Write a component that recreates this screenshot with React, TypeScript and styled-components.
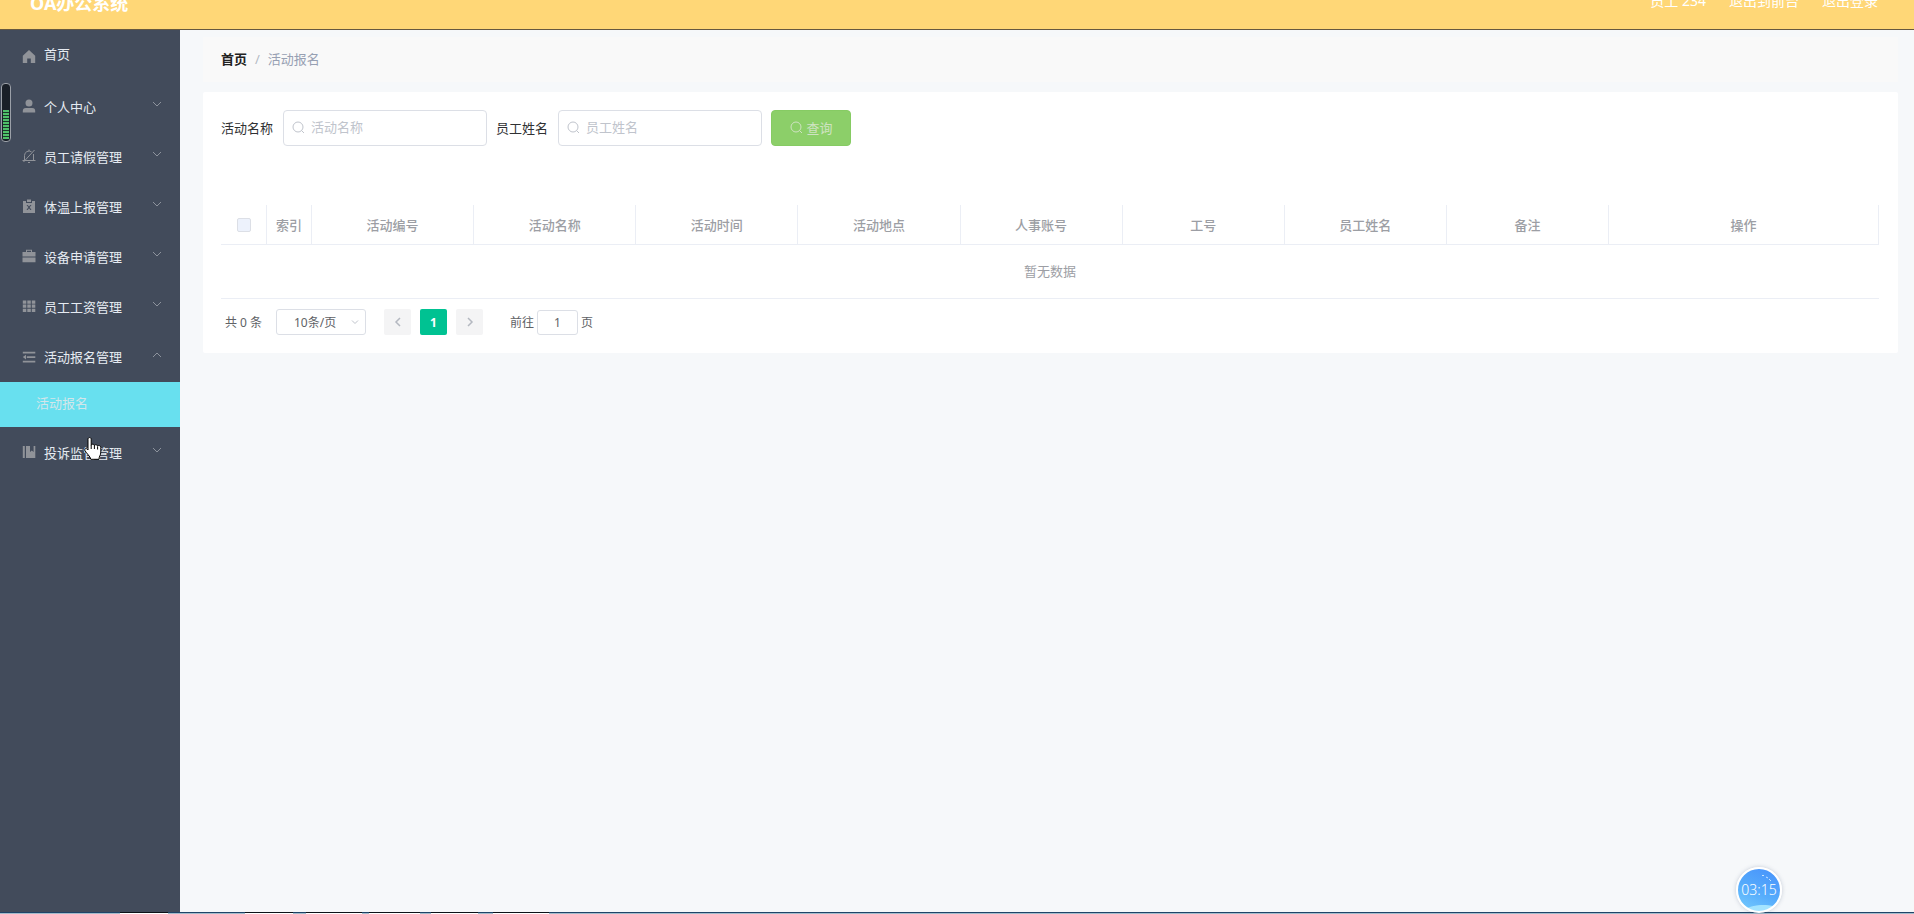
import React from 'react';
import styled, { createGlobalStyle } from 'styled-components';

const Global = createGlobalStyle`
  * { box-sizing: border-box; }
  html, body, #root { height: 100%; }
  body {
    margin: 0;
    overflow: hidden;
    background: #f6f8fa;
    color: #303133;
    font-family: "Noto Sans", "Noto Sans CJK SC", sans-serif;
    font-size: 13px;
  }
  button, input, select { font: inherit; margin: 0; }
  a { color: inherit; text-decoration: none; }
  h1, ul { margin: 0; padding: 0; }
  ul { list-style: none; }
`;

const Page = styled.div`
  height: 100vh;
  display: flex;
  flex-direction: column;
  overflow: hidden;
`;

const Header = styled.header`
  flex: none;
  height: 30px;
  display: flex;
  justify-content: space-between;
  align-items: flex-end;
  padding: 0 36px 16px 30px;
  background: #ffd777;
  border-bottom: 1px solid #66583f;
  color: #fff;
  overflow: hidden;
`;

const Title = styled.h1`
  font-size: 18px;
  line-height: 20px;
  font-weight: 700;
`;

const HeaderLinks = styled.nav`
  display: flex;
  gap: 23px;
  font-size: 14px;
  line-height: 24px;
`;

const Body = styled.div`
  flex: 1;
  min-height: 0;
  display: flex;
`;

const Sidebar = styled.nav`
  flex: none;
  width: 180px;
  background: #424b5b;
`;

const MenuIcon = styled.svg`
  width: 14px;
  height: 14px;
  flex: none;
  fill: #909399;
  stroke: none;
`;

const MenuButton = styled.button<{ $home?: boolean; $open?: boolean }>`
  width: 100%;
  height: ${(p) => (p.$home || p.$open ? 51 : 50)}px;
  padding: 0 18px 0 22px;
  padding-bottom: ${(p) => (p.$home ? 4 : 0)}px;
  display: flex;
  align-items: center;
  gap: 8px;
  border: 0;
  background: none;
  color: #e6ebf2;
  font-size: 13px;
  text-align: left;
  cursor: pointer;
  & > span { flex: 1; }
  & > ${MenuIcon} { margin-top: ${(p) => (p.$home ? 4 : 0)}px; }
`;

const Chevron = styled.svg`
  width: 10px;
  height: 14px;
  flex: none;
  margin-bottom: 4px;
  fill: none;
  stroke: #8d939d;
`;

const SubItem = styled.a`
  display: block;
  height: 45px;
  padding-left: 36px;
  line-height: 42px;
  background: #68e0ef;
  color: #d3e6ea;
`;

const Main = styled.main`
  flex: 1;
  min-width: 0;
  padding: 7px 16px 0 23px;
`;

const Crumbs = styled.nav`
  display: flex;
  gap: 6px;
  height: 45px;
  margin-bottom: 10px;
  padding: 0 19px 0 18px;
  line-height: 45px;
  background: #f9f9f9;
  color: #97a0b3;
  & > a { color: #222; font-weight: 700; }
  & > i { color: #b4b9c4; font-style: normal; padding: 0 2px; }
`;

const Card = styled.section`
  background: #fff;
  border-radius: 2px;
  padding: 18px 19px 18px 18px;
`;

const SearchForm = styled.form`
  display: flex;
  align-items: center;
  gap: 9px;
  margin-bottom: 59px;
`;

const Field = styled.label`
  display: flex;
  align-items: center;
  gap: 10px;
`;

const FieldName = styled.span`
  padding-bottom: 2px;
`;

const InputBox = styled.span`
  width: 204px;
  height: 36px;
  display: flex;
  align-items: center;
  gap: 6px;
  padding: 0 8px 2px;
  border: 1px solid #dcdfe6;
  border-radius: 4px;
  color: #c0c4cc;
`;

const TextInput = styled.input`
  flex: 1;
  min-width: 0;
  padding: 0;
  border: 0;
  outline: 0;
  background: none;
  &::placeholder { color: #c0c4cc; opacity: 1; }
`;

const SearchButton = styled.button`
  width: 80px;
  height: 36px;
  display: flex;
  align-items: center;
  justify-content: center;
  gap: 4px;
  padding: 0 0 2px;
  border: 1px solid #86cb63;
  border-radius: 4px;
  background: #8ccf69;
  color: #cfe3c2;
`;

const Glass = styled.svg`
  width: 13px;
  height: 13px;
  flex: none;
  fill: none;
  stroke: currentColor;
`;

const Table = styled.table`
  width: 100%;
  table-layout: fixed;
  border-collapse: separate;
  border-spacing: 0;
  color: #9c9ea4;
`;

const Col = styled.col<{ $w?: number }>`
  width: ${(p) => (p.$w ? `${p.$w}px` : 'auto')};
`;

const Th = styled.th`
  height: 40px;
  padding: 0;
  font-weight: 500;
  border-right: 1px solid #ebeef5;
  border-bottom: 1px solid #ebeef5;
`;

const EmptyCell = styled.td`
  height: 54px;
  padding: 0 0 2px;
  text-align: center;
  border-bottom: 1px solid #ebeef5;
`;

const Check = styled.input`
  appearance: none;
  display: block;
  width: 14px;
  height: 14px;
  margin: 0 auto;
  background: #edf2fc;
  border: 1px solid #dcdfe6;
  border-radius: 2px;
`;

const Pager = styled.div`
  display: flex;
  align-items: center;
  gap: 9px;
  height: 26px;
  margin-top: 10px;
  padding-left: 4px;
  font-size: 12px;
  color: #606266;
`;

const Total = styled.span`
  width: 42px;
`;

const SizeBox = styled.span`
  width: 90px;
  height: 26px;
  margin-right: 9px;
  display: flex;
  align-items: center;
  padding-right: 6px;
  border: 1px solid #dcdfe6;
  border-radius: 3px;
  color: #c0c4cc;
`;

const SizeSelect = styled.select`
  appearance: none;
  flex: 1;
  min-width: 0;
  padding: 0 0 0 17px;
  border: 0;
  background: none;
  color: #606266;
`;

const SmallArrow = styled.svg`
  width: 8px;
  height: 10px;
  flex: none;
  fill: none;
  stroke: currentColor;
`;

const PageButton = styled.button<{ $active?: boolean }>`
  width: 27px;
  height: 26px;
  display: flex;
  align-items: center;
  justify-content: center;
  padding: 0;
  border: 0;
  border-radius: 2px;
  font-weight: 700;
  background: ${(p) => (p.$active ? '#00c292' : '#f4f4f5')};
  color: ${(p) => (p.$active ? '#fff' : '#b4b8c0')};
`;

const Jump = styled.label`
  display: flex;
  align-items: center;
  gap: 3px;
  margin-left: 18px;
`;

const JumpInput = styled.input`
  width: 41px;
  height: 25px;
  padding: 0;
  border: 1px solid #dcdfe6;
  border-radius: 3px;
  text-align: center;
  color: #606266;
`;

const Meter = styled.div`
  position: absolute;
  left: 1px;
  top: 83px;
  width: 10px;
  height: 59px;
  padding: 26px 1px 2px;
  border: 1px solid #9ba0a8;
  border-radius: 4px;
  background: #191f28;
`;

const MeterBars = styled.div`
  height: 100%;
  background: repeating-linear-gradient(#4fc26a 0 2px, #1c3a2c 2px 3px);
`;

const Timer = styled.div`
  position: absolute;
  right: 132px;
  bottom: 1px;
  width: 46px;
  height: 46px;
  border: 2px solid #fff;
  border-radius: 50%;
  background:
    radial-gradient(ellipse 22px 8px at 60% 102%, #a4e4ff 0 80%, transparent 90%),
    linear-gradient(205deg, #4791fb, #56acfc 55%, #78cdfd);
  box-shadow: 0 0 4px rgba(80, 100, 130, 0.3);
  color: #fff;
  font-size: 14px;
  font-weight: 300;
  line-height: 42px;
  text-align: center;
`;

const Sparkle = styled.svg`
  position: absolute;
  top: 5px;
  right: 8px;
  width: 11px;
  height: 8px;
  fill: none;
  stroke: #c5e2ff;
`;

const Pointer = styled.svg`
  position: absolute;
  left: 84px;
  top: 437px;
  width: 18px;
  height: 23px;
`;

const Taskbar = styled.footer`
  flex: none;
  display: flex;
  height: 2px;
  padding-left: 120px;
  border-top: 1px solid #1f4468;
  background: #a3bccb;
`;

const TaskWindow = styled.i<{ $w: number; $gap: number }>`
  width: ${(p) => p.$w}px;
  height: 2px;
  margin: -1px ${(p) => p.$gap}px 0 0;
  background: #fff;
  border-top: 1px solid #0c1118;
`;

const taskWindows = [
  [48, 77],
  [48, 13],
  [56, 7],
  [51, 11],
  [47, 15],
  [56, 0],
];

const icons: Record<string, React.ReactNode> = {
  home: <path d="M7 1 .8 6.8V14h4.400V9.600h3.600V14h4.400V6.800z" />,
  user: <path d="M7 .5a3.500 3.500 0 1 1 0 7 3.500 3.500 0 0 1 0-7M.8 13.500v-1.500c0-2 1-3 3-3h6.400c2 0 3 1 3 3v1.500z" />,
  bell: <path fill="none" stroke="#909399" d="M.5 11.500h13M2.500 11.500V6.500a4.500 4.500 0 0 1 7-3.700M11.500 5v6.500M7 2V.5M6 13.500h2M1.500 13 12.500 1" />,
  clip: <path fillRule="evenodd" d="M1 2h3v2h6V2h3v12H1zM5 .5h4V3H5zM4.500 6l1.800 2.300L4.500 11h1.200L7 9.200 8.300 11h1.200L7.700 8.300 9.500 6H8.300L7 7.500 5.700 6z" />,
  case: <path fillRule="evenodd" d="M4 3V.8h6V3h3.500v4.500H.5V3zm1 0h4V1.800H5zM.5 8.500h13v4.700H.5z" />,
  grid: <path d="M.8 1.500h3.500v3.200H.8zm4.500 0h3.500v3.200H5.300zm4.500 0h3.500v3.200H9.800zM.8 5.600h3.500v3.200H.8zm4.500 0h3.500v3.200H5.300zm4.500 0h3.500v3.200H9.800zM.8 9.700h3.500v3.200H.8zm4.500 0h3.500v3.200H5.300zm4.500 0h3.500v3.200H9.800z" />,
  fold: <path d="M.8 1.800h12.500v1.700H.8zm4 4.500h8.500V8H4.800zM.8 10.800h12.500v1.700H.8zM4 4.800v4.600L.8 7.100z" />,
  book: <path d="M.8 1h2v12h-2zM4 1h4v6l1.800-1.500L11.600 7V1h1.700v12H4z" />,
};

const menu = [
  { label: '首页', icon: 'home' },
  { label: '个人中心', icon: 'user' },
  { label: '员工请假管理', icon: 'bell' },
  { label: '体温上报管理', icon: 'clip' },
  { label: '设备申请管理', icon: 'case' },
  { label: '员工工资管理', icon: 'grid' },
  { label: '活动报名管理', icon: 'fold', child: '活动报名' },
  { label: '投诉监管管理', icon: 'book' },
];

const columns = ['活动编号', '活动名称', '活动时间', '活动地点', '人事账号', '工号', '员工姓名', '备注', '操作'];

const SearchIcon = () => (
  <Glass viewBox="0 0 13 13" aria-hidden="true">
    <circle cx="6" cy="6" r="5" />
    <path d="m9.500 9.500 2.500 2.500" />
  </Glass>
);

const SearchField = ({ label }: { label: string }) => (
  <Field>
    <FieldName>{label}</FieldName>
    <InputBox>
      <SearchIcon />
      <TextInput type="text" placeholder={label} />
    </InputBox>
  </Field>
);

export default function App() {
  return (
    <Page>
      <Global />
      <Header>
        <Title>OA办公系统</Title>
        <HeaderLinks>
          <span>员工 234</span>
          <a href="#front">退出到前台</a>
          <a href="#logout">退出登录</a>
        </HeaderLinks>
      </Header>
      <Body>
        <Sidebar>
          <ul>
            {menu.map((m) => (
              <li key={m.label}>
                <MenuButton type="button" $home={m.icon === 'home'} $open={!!m.child}>
                  <MenuIcon viewBox="0 0 14 14" aria-hidden="true">{icons[m.icon]}</MenuIcon>
                  <span>{m.label}</span>
                  {m.icon !== 'home' && (
                    <Chevron viewBox="0 0 10 14" aria-hidden="true">
                      <path d={m.child ? 'm1 9 4-4 4 4' : 'm1 5 4 4 4-4'} />
                    </Chevron>
                  )}
                </MenuButton>
                {m.child && <SubItem href="#activity">{m.child}</SubItem>}
              </li>
            ))}
          </ul>
        </Sidebar>
        <Main>
          <Crumbs aria-label="breadcrumb">
            <a href="#home">首页</a>
            <i>/</i>
            <span>活动报名</span>
          </Crumbs>
          <Card>
            <SearchForm onSubmit={(e) => e.preventDefault()}>
              <SearchField label="活动名称" />
              <SearchField label="员工姓名" />
              <SearchButton type="submit">
                <SearchIcon />
                查询
              </SearchButton>
            </SearchForm>
            <Table>
              <colgroup>
                <Col $w={46} />
                <Col $w={45} />
                {columns.map((c) => <Col key={c} $w={c === '操作' ? 270 : undefined} />)}
              </colgroup>
              <thead>
                <tr>
                  <Th><Check type="checkbox" disabled aria-label="全选" /></Th>
                  <Th>索引</Th>
                  {columns.map((c) => <Th key={c}>{c}</Th>)}
                </tr>
              </thead>
              <tbody>
                <tr><EmptyCell colSpan={11}>暂无数据</EmptyCell></tr>
              </tbody>
            </Table>
            <Pager>
              <Total>共 0 条</Total>
              <SizeBox>
                <SizeSelect aria-label="每页条数"><option>10条/页</option></SizeSelect>
                <SmallArrow viewBox="0 0 8 10" aria-hidden="true"><path d="m1 3.500 3 3 3-3" /></SmallArrow>
              </SizeBox>
              <PageButton type="button" aria-label="上一页" disabled>
                <SmallArrow viewBox="0 0 8 10" strokeWidth="1.500"><path d="M6 1 2 5l4 4" /></SmallArrow>
              </PageButton>
              <PageButton type="button" $active>1</PageButton>
              <PageButton type="button" aria-label="下一页" disabled>
                <SmallArrow viewBox="0 0 8 10" strokeWidth="1.500"><path d="m2 1 4 4-4 4" /></SmallArrow>
              </PageButton>
              <Jump>
                前往
                <JumpInput type="text" defaultValue="1" aria-label="页码" />
                页
              </Jump>
            </Pager>
          </Card>
        </Main>
      </Body>
      <Taskbar>
        {taskWindows.map(([w, gap], i) => <TaskWindow key={i} $w={w} $gap={gap} />)}
      </Taskbar>
      <Meter><MeterBars /></Meter>
      <Timer>
        03:15
        <Sparkle viewBox="0 0 11 8" aria-hidden="true">
          <path d="M1 1.500h2M5 3l2 1M8 5l2 2" />
        </Sparkle>
      </Timer>
      <Pointer viewBox="0 0 18 23" aria-hidden="true">
        <path
          d="M4 13V2.200c0-2.200 3.200-2.200 3.200 0V8.500c0-1.800 3.200-1.800 3.200.3 0-1.600 3.200-1.400 3.200.6 0-1.400 3.200-1.200 3.200 1.100V15c0 3.500-1.800 4-1.800 7.300H6.800C6.500 19.500 2.500 16.500.9 13.500c-.9-2 1.700-2.800 3.100-.5z"
          fill="#fff"
          stroke="#000"
        />
        <path d="M7.200 8.500V12M10.400 9v3M13.600 10v2.500" fill="none" stroke="#000" />
      </Pointer>
    </Page>
  );
}
